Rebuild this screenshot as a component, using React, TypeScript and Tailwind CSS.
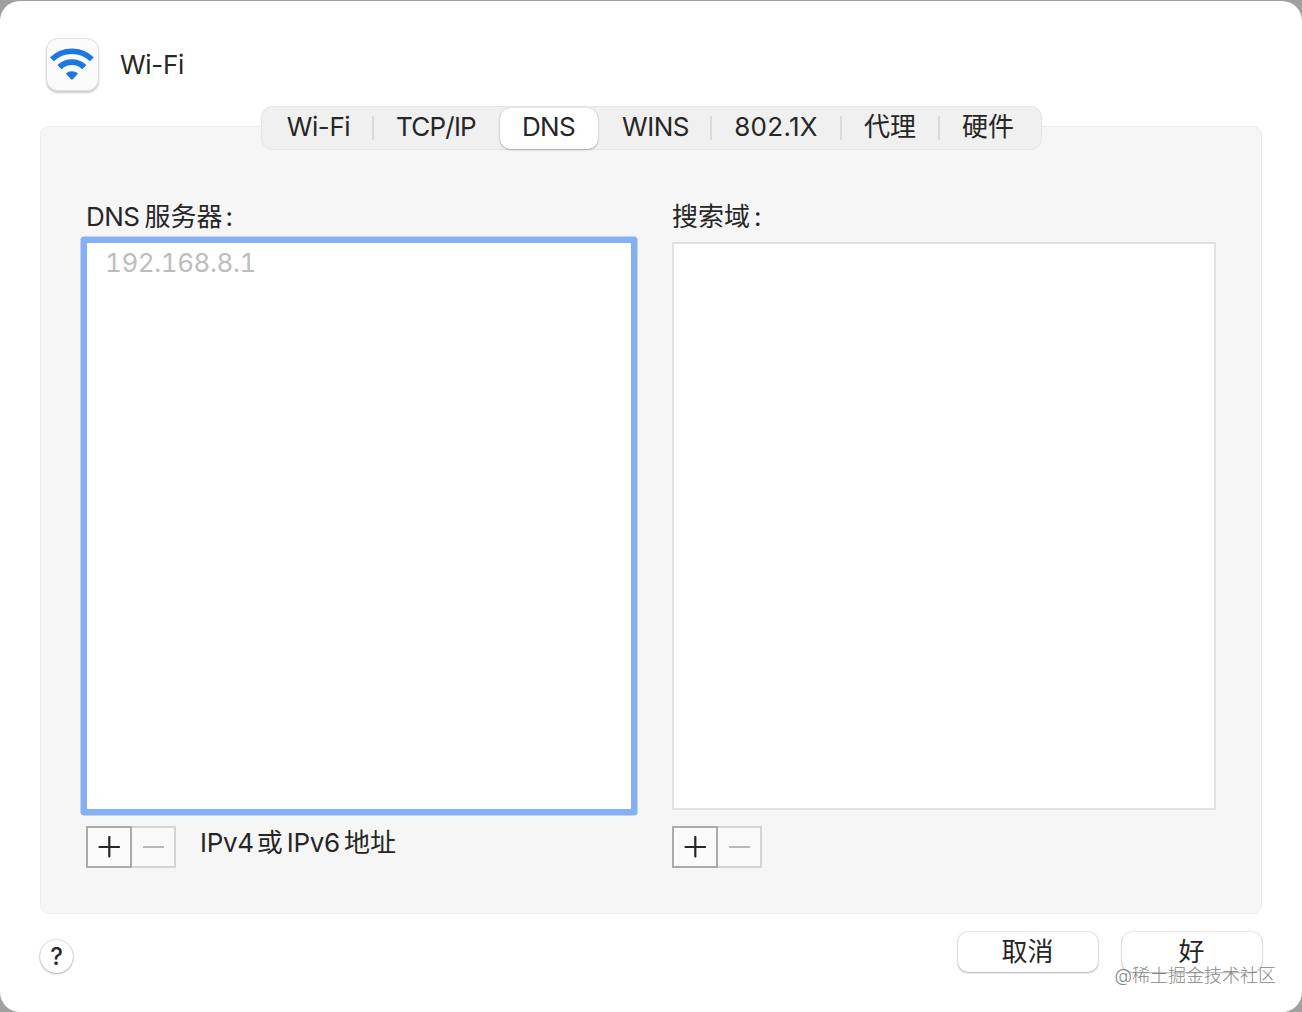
import { useState } from "react";
import clsx from "clsx";

type Tab = {
  label: string;
  width: string;
  text: string;
  divider?: boolean;
};

const tabs: Tab[] = [
  { label: "Wi-Fi", width: "w-[110px]", text: "tracking-[-0.4px] pl-[2px]", divider: true },
  { label: "TCP/IP", width: "w-[126px]", text: "tracking-[-0.8px] pr-px" },
  { label: "DNS", width: "w-[98px]", text: "tracking-[-0.6px]" },
  { label: "WINS", width: "w-[114px]", text: "tracking-[-0.5px] pl-[4px]", divider: true },
  { label: "802.1X", width: "w-[130px]", text: "tracking-[0.3px] pl-px", divider: true },
  { label: "代理", width: "w-[98px]", text: "pl-px", divider: true },
  { label: "硬件", width: "w-[97px]", text: "" },
];

function WifiIcon() {
  return (
    <div className="flex h-[53px] w-[53px] items-center justify-center rounded-[12px] border border-[#dedede] bg-[#fbfbfb] shadow-[0_2px_2px_rgba(0,0,0,0.2)]">
      <svg width="51" height="51" viewBox="0 0 51 51" fill="none">
        <path d="M4.9 20.2A29 29 0 0 1 44.9 20.2" stroke="#1a78df" strokeWidth="5.6" />
        <path d="M12.4 28.1A18 18 0 0 1 37.4 28.1" stroke="#1a78df" strokeWidth="5.8" />
        <path d="M18.7 34.6A9.4 9.4 0 0 1 31.1 34.6L25.8 40.3Q24.9 41.2 24 40.3Z" fill="#1a78df" />
      </svg>
    </div>
  );
}

function AddRemove() {
  return (
    <div className="flex h-[42px] w-[90px]">
      <button className="flex w-[46px] items-center justify-center border-2 border-[#ababab] bg-[#fbfbfb]">
        <svg width="22" height="22" viewBox="0 0 22 22" stroke="#262626" strokeWidth="2.2" strokeLinecap="round">
          <path d="M1.5 11H21M11.3 1V20.5" />
        </svg>
      </button>
      <button className="flex w-[44px] items-center justify-center border-y-2 border-r-2 border-[#d4d4d4] bg-[#f9f9f9]">
        <svg width="22" height="22" viewBox="0 0 22 22" stroke="#b9b9b9" strokeWidth="2">
          <path d="M1 11H22" />
        </svg>
      </button>
    </div>
  );
}

export default function App() {
  const [active, setActive] = useState("DNS");

  return (
    <div className="h-[1012px] w-[1302px] overflow-hidden bg-[#a0a0a0] pt-px font-['Inter','Noto_Sans_CJK_SC',sans-serif] text-[26px] leading-[32px] text-[#262626]">
      <div className="relative flex h-[1011px] flex-col rounded-[20px] bg-white px-10">
        <header className="flex h-[105px] items-start pt-[37px] pl-[5.5px]">
          <WifiIcon />
          <h1 className="mt-[11px] ml-[21.5px] tracking-[-0.3px]">Wi-Fi</h1>
        </header>

        <nav className="relative z-10 flex h-11 w-[781px] items-center self-center rounded-[11px] border border-[#e6e6e6] bg-[#f0f0f0] pl-[2px]">
          {tabs.map((tab) => (
            <button
              key={tab.label}
              onClick={() => setActive(tab.label)}
              className={clsx(
                "flex h-[41px] shrink-0 items-center justify-center",
                tab.width,
                active === tab.label &&
                  "rounded-[10px] bg-white shadow-[0_0_1px_rgba(0,0,0,0.3),0_1px_2px_rgba(0,0,0,0.25)]",
              )}
            >
              <span className={clsx("grow pb-[2px] text-center", tab.text)}>{tab.label}</span>
              {tab.divider && active !== tab.label && <i className="h-6 w-[2px] bg-[#dadada]" />}
            </button>
          ))}
        </nav>

        <main className="-mt-6 flex h-[788px] gap-[41px] rounded-[9px] border border-[#ebebeb] bg-[#f6f6f6] pt-[74px] pl-[45px]">
          <section>
            <h2 className="flex h-[42px]">
              <span className="tracking-[-0.5px]">DNS</span>
              <span className="ml-[5px]">服务器</span>
              <span className="ml-[3px]">:</span>
            </h2>
            <div className="ml-px h-[566px] w-[544px] rounded-[1px] bg-white pt-1 pl-[18px] tracking-[-0.45px] text-[#bdbdbd] tabular-nums ring-[6.5px] ring-[#86b0f4]">
              192.168.8.1
            </div>
            <div className="mt-[17px] flex">
              <AddRemove />
              <p className="mt-px ml-6 flex">
                <span className="tracking-[-0.3px]">IPv4</span>
                <span className="ml-[3px]">或</span>
                <span className="ml-[4px] tracking-[-0.3px]">IPv6</span>
                <span className="ml-[4px]">地址</span>
              </p>
            </div>
          </section>

          <section>
            <h2 className="flex h-[41px]">
              <span>搜索域</span>
              <span className="ml-[4px]">:</span>
            </h2>
            <div className="h-[568px] w-[544px] border-2 border-[#e2e2e2] bg-white" />
            <div className="mt-4">
              <AddRemove />
            </div>
          </section>
        </main>

        <footer className="flex items-start pt-[18px]">
          <button className="mt-2 flex h-[33px] w-[33px] items-center justify-center rounded-full bg-white text-[24px] font-medium shadow-[0_0_2px_rgba(0,0,0,0.3),0_1px_2px_rgba(0,0,0,0.25)]">
            ?
          </button>
          <button className="ml-auto flex h-10 w-[140px] items-center justify-center rounded-[10px] bg-white pr-px shadow-[0_0_2px_rgba(0,0,0,0.25),0_1px_2px_rgba(0,0,0,0.25)]">
            取消
          </button>
          <button className="ml-6 flex h-10 w-[140px] items-center justify-center rounded-[10px] bg-white pr-px shadow-[0_0_2px_rgba(0,0,0,0.25),0_1px_2px_rgba(0,0,0,0.25)]">
            好
          </button>
        </footer>

        <span className="absolute right-[26px] bottom-[24px] text-[18px] leading-6 font-light whitespace-nowrap text-[#858585]">
          @稀土掘金技术社区
        </span>
      </div>
    </div>
  );
}
